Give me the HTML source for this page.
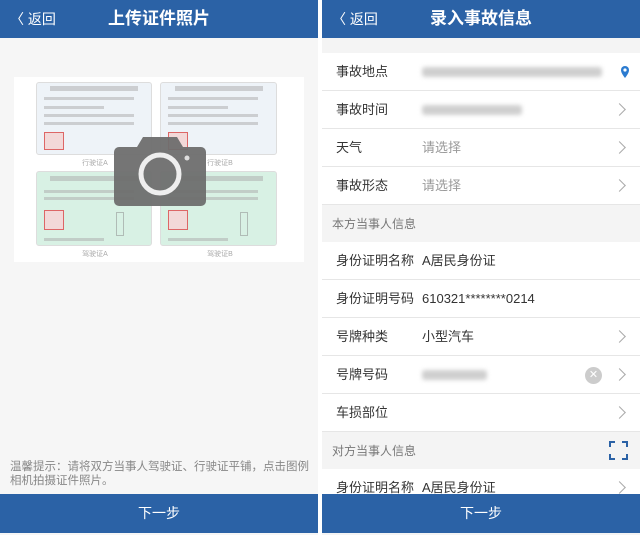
<!DOCTYPE html>
<html><head><meta charset="utf-8"><style>
*{margin:0;padding:0;box-sizing:border-box}
body{width:640px;height:535px;position:relative;background:#fff;font-family:"Liberation Sans","Noto Sans CJK SC",sans-serif;overflow:hidden}
.p{position:absolute;top:0;height:535px;overflow:hidden}
.hd{position:absolute;left:0;right:0;top:0;height:38px;background:#2b62a6;color:#fff}
.hd .t{position:absolute;left:0;right:0;top:0;line-height:38px;text-align:center;font-size:17px;font-weight:bold}
.hd .b{position:absolute;left:10px;top:0;line-height:38px;font-size:14px}
.ft{position:absolute;left:0;right:0;top:494px;height:39px;background:#2b62a6;color:#fff;text-align:center;line-height:39px;font-size:14px}
.row{position:absolute;left:0;right:0;height:38px;border-bottom:1px solid #e6e6e6;font-size:13px;color:#333;background:#fff}
.row .l{position:absolute;left:14px;top:0;line-height:38px}
.row .v{position:absolute;left:100px;top:0;line-height:38px}
.row .g{color:#999}
.row .c{position:absolute;right:16px;top:14px;width:9px;height:9px;border-right:1.5px solid #aaa;border-top:1.5px solid #aaa;transform:rotate(45deg)}
.sec{position:absolute;left:0;right:0;height:38px;background:#f4f4f4;font-size:12px;color:#777}
.sec span{position:absolute;left:10px;top:0;line-height:38px}
.card{position:absolute;border-radius:3px;border:1px solid #ddd}
.blur{position:absolute;background:#cfcfcf;filter:blur(2px);border-radius:3px}
.ln{position:absolute;height:3px;background:#aaa;opacity:.5}
</style></head><body>
<div class="p" style="left:0;width:318px;background:#f6f6f6">
 <div class="hd"><span class="b">〈 返回</span><div class="t">上传证件照片</div></div>
 <div style="position:absolute;left:14px;top:77px;width:290px;height:185px;background:#fff"></div>
 <div class="card" style="left:36px;top:82px;width:116px;height:73px;background:#eef3f8"></div>
 <div class="card" style="left:160px;top:82px;width:117px;height:73px;background:#eef3f8"></div>
 <div class="card" style="left:36px;top:171px;width:116px;height:75px;background:#d8f1e4"></div>
 <div class="card" style="left:160px;top:171px;width:117px;height:75px;background:#d8f1e4"></div>
 <div class="ln" style="left:50px;top:86px;width:88px;height:5px"></div>
 <div class="ln" style="left:175px;top:86px;width:88px;height:5px"></div>
 <div class="ln" style="left:50px;top:176px;width:88px;height:5px"></div>
 <div class="ln" style="left:175px;top:176px;width:88px;height:5px"></div>
 <div class="ln" style="left:44px;top:97px;width:90px"></div><div class="ln" style="left:44px;top:106px;width:60px"></div><div class="ln" style="left:44px;top:114px;width:90px"></div><div class="ln" style="left:44px;top:122px;width:90px"></div>
 <div class="ln" style="left:168px;top:97px;width:90px"></div><div class="ln" style="left:168px;top:106px;width:60px"></div><div class="ln" style="left:168px;top:114px;width:90px"></div><div class="ln" style="left:168px;top:122px;width:90px"></div>
 <div class="ln" style="left:44px;top:190px;width:90px"></div><div class="ln" style="left:44px;top:197px;width:90px"></div><div class="ln" style="left:44px;top:238px;width:60px"></div>
 <div class="ln" style="left:168px;top:190px;width:90px"></div><div class="ln" style="left:168px;top:197px;width:90px"></div><div class="ln" style="left:168px;top:238px;width:60px"></div>
 <div style="position:absolute;left:44px;top:132px;width:20px;height:18px;background:#f3d8d8;border:1px solid #d66"></div>
 <div style="position:absolute;left:168px;top:132px;width:20px;height:18px;background:#f3d8d8;border:1px solid #d66"></div>
 <div style="position:absolute;left:44px;top:210px;width:20px;height:20px;background:#f3d8d8;border:1px solid #d66"></div>
 <div style="position:absolute;left:168px;top:210px;width:20px;height:20px;background:#f3d8d8;border:1px solid #d66"></div>
 <div style="position:absolute;left:116px;top:212px;width:8px;height:24px;border:1px solid #888;opacity:.5"></div>
 <div style="position:absolute;left:240px;top:212px;width:8px;height:24px;border:1px solid #888;opacity:.5"></div>
 <div style="position:absolute;left:40px;top:158px;width:110px;text-align:center;font-size:7px;color:#aaa">行驶证A</div>
 <div style="position:absolute;left:165px;top:158px;width:110px;text-align:center;font-size:7px;color:#aaa">行驶证B</div>
 <div style="position:absolute;left:40px;top:249px;width:110px;text-align:center;font-size:7px;color:#aaa">驾驶证A</div>
 <div style="position:absolute;left:165px;top:249px;width:110px;text-align:center;font-size:7px;color:#aaa">驾驶证B</div>
 <svg style="position:absolute;left:113px;top:134px" width="94" height="72" viewBox="0 0 94 72">
  <path d="M30 3h34l6 10h18a5 5 0 0 1 5 5v49a5 5 0 0 1-5 5H6a5 5 0 0 1-5-5V18a5 5 0 0 1 5-5h18z" fill="#6e6e6e" opacity=".95"/>
  <circle cx="47" cy="40" r="19" fill="none" stroke="#eee" stroke-width="5"/>
  <circle cx="74" cy="24" r="2.5" fill="#ddd"/>
 </svg>
 <div style="position:absolute;left:10px;top:460px;width:300px;font-size:11.5px;line-height:14px;color:#888">温馨提示：请将双方当事人驾驶证、行驶证平铺，点击图例相机拍摄证件照片。</div>
 <div class="ft">下一步</div>
</div>
<div class="p" style="left:322px;width:318px;background:#f4f4f4">
 <div class="hd"><span class="b">〈 返回</span><div class="t">录入事故信息</div></div>
 <div class="row" style="top:53px"><span class="l">事故地点</span><div class="blur" style="left:100px;top:14px;width:180px;height:10px"></div><svg style="position:absolute;right:10px;top:12px" width="10" height="14" viewBox="0 0 10 14"><path d="M5 13C2 9 1 7 1 5a4 4 0 0 1 8 0c0 2-1 4-4 8z" fill="#2b7bd0"/><circle cx="5" cy="5" r="1.6" fill="#fff"/></svg></div>
 <div class="row" style="top:91px"><span class="l">事故时间</span><div class="blur" style="left:100px;top:14px;width:100px;height:10px"></div><i class="c"></i></div>
 <div class="row" style="top:129px"><span class="l">天气</span><span class="v g">请选择</span><i class="c"></i></div>
 <div class="row" style="top:167px"><span class="l">事故形态</span><span class="v g">请选择</span><i class="c"></i></div>
 <div class="sec" style="top:205px"><span>本方当事人信息</span></div>
 <div class="row" style="top:242px"><span class="l">身份证明名称</span><span class="v">A居民身份证</span></div>
 <div class="row" style="top:280px"><span class="l">身份证明号码</span><span class="v">610321********0214</span></div>
 <div class="row" style="top:318px"><span class="l">号牌种类</span><span class="v">小型汽车</span><i class="c"></i></div>
 <div class="row" style="top:356px"><span class="l">号牌号码</span><div class="blur" style="left:100px;top:14px;width:65px;height:10px"></div><div style="position:absolute;right:38px;top:11px;width:17px;height:17px;border-radius:50%;background:#ccc;color:#fff;font-size:11px;text-align:center;line-height:17px">✕</div><i class="c"></i></div>
 <div class="row" style="top:394px"><span class="l">车损部位</span><i class="c"></i></div>
 <div class="sec" style="top:432px"><span>对方当事人信息</span><svg style="position:absolute;right:12px;top:9px" width="19" height="19" viewBox="0 0 19 19" fill="none" stroke="#2b62a6" stroke-width="2"><path d="M1 6V1h5M13 1h5v5M1 13v5h5M13 18h5v-5"/></svg></div>
 <div class="row" style="top:469px"><span class="l">身份证明名称</span><span class="v">A居民身份证</span><i class="c"></i></div>
 <div class="ft">下一步</div>
</div>
</body></html>
